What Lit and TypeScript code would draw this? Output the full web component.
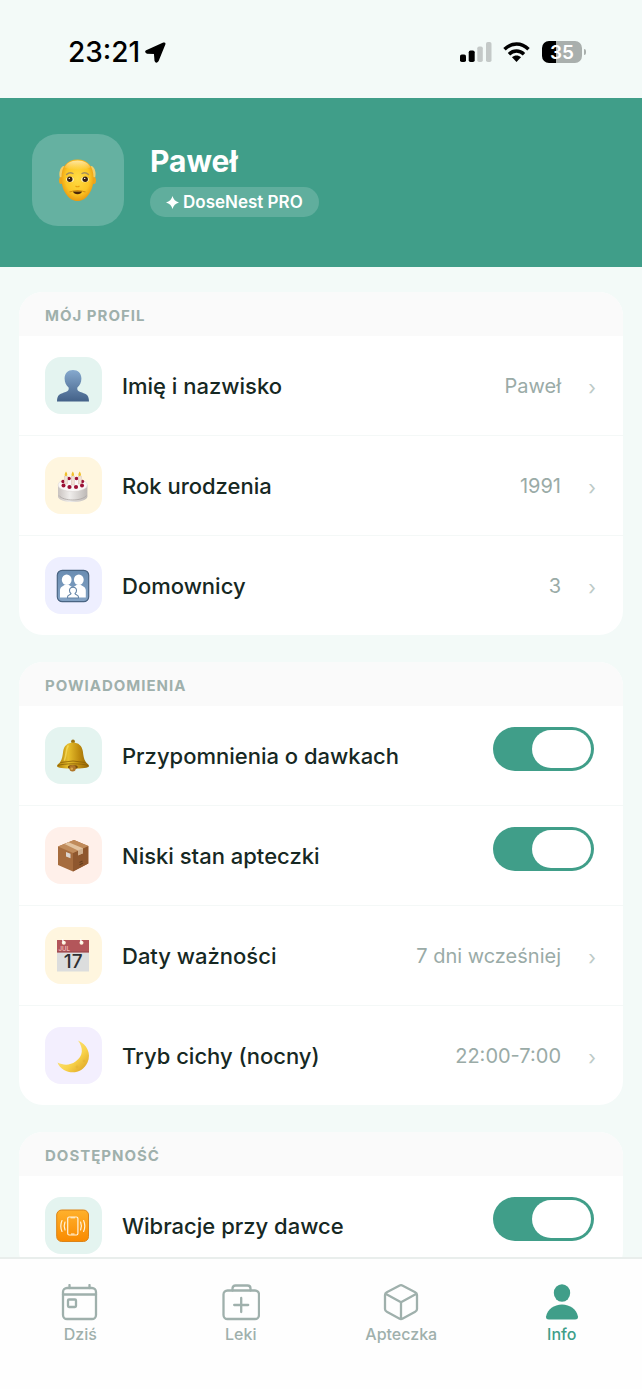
import { LitElement, html, css, svg, nothing, type TemplateResult } from "lit";
import { customElement, property } from "lit/decorators.js";

const avatarArt = html`<svg viewBox="0 0 92 92" aria-hidden="true">
  <defs>
    <radialGradient id="skin" cx="50%" cy="45%" r="58%">
      <stop offset="0" stop-color="#ffdc45" /><stop offset=".65" stop-color="#fcc625" /><stop offset="1" stop-color="#e8920c" />
    </radialGradient>
    <linearGradient id="shine" x1="0" y1="0" x2="0" y2="1">
      <stop offset="0" stop-color="#ffe7a0" /><stop offset="1" stop-color="#ffe7a0" stop-opacity="0" />
    </linearGradient>
  </defs>
  <path d="M31 32c-3 2-4.500 7-3 12l5 3 2-14zM60 32c3 2 4.500 7 3 12l-5 3-2-14z" fill="#f3cf6a" />
  <ellipse cx="29" cy="46.500" rx="2" ry="3.500" fill="#eda51c" />
  <ellipse cx="62" cy="46.500" rx="2" ry="3.500" fill="#eda51c" />
  <path d="M45.500 25.500C35 25.500 29.500 33 29.500 43c0 7 1 12 4.500 17 3 4.500 7 7 11.500 7S54 64.500 57 60c3.500-5 4.500-10 4.500-17 0-10-5.500-17.500-16-17.500z" fill="url(#skin)" />
  <path d="M45.500 26.500c-7 0-11 3-13 7 6 3 20 3 26 0-2-4-6-7-13-7z" fill="url(#shine)" />
  <path d="M34.500 40.500q3-3 6.500-1M56.500 40.500q-3-3-6.500-1" fill="none" stroke="#a9925b" stroke-width="1.400" stroke-linecap="round" />
  <ellipse cx="38" cy="45.500" rx="3.800" ry="2.800" fill="#fff4c4" /><ellipse cx="53" cy="45.500" rx="3.800" ry="2.800" fill="#fff4c4" />
  <circle cx="37.800" cy="45.300" r="2.700" fill="#38200f" /><circle cx="53.200" cy="45.300" r="2.700" fill="#38200f" />
  <circle cx="37.300" cy="44.400" r=".7" fill="#fff" /><circle cx="52.700" cy="44.400" r=".7" fill="#fff" />
  <path d="M43.500 52q2 1.500 4 0" stroke="#e6a010" stroke-width="1.200" fill="none" />
  <path d="M37.500 58q8-3 16 0" stroke="#d28a12" stroke-width="1.200" fill="none" />
  <path d="M41 57.500h9q-1 2.800-4.500 2.800T41 57.500z" fill="#4d2608" />
</svg>`;

const tile: Record<string, TemplateResult> = {
  person: svg`
    <defs><linearGradient id="g" x1="0" y1="0" x2="0" y2="1"><stop offset="0" stop-color="#86a9ce"/><stop offset="1" stop-color="#436188"/></linearGradient></defs>
    <path d="M28 13c-5 0-8.400 3.400-8.400 8.600 0 3.800 1.600 7 4 9 .6 2.200-.4 3.400-3 4.500-4.500 1.700-8.600 2-8.600 9.400h32c0-7.400-4.100-7.700-8.600-9.400-2.600-1.100-3.600-2.300-3-4.500 2.400-2 4-5.200 4-9C36.400 16.400 33 13 28 13z" fill="url(#g)"/>`,
  cake: svg`
    <defs><linearGradient id="g" x1="0" y1="0" x2="1" y2="0"><stop offset="0" stop-color="#c9c3c0"/><stop offset=".4" stop-color="#efedeb"/><stop offset="1" stop-color="#bdb8b5"/></linearGradient></defs>
    <path d="M13 28v11.500c0 3.500 7 5.500 14.700 5.500s14.700-2 14.700-5.500V28z" fill="url(#g)"/>
    <path d="M14 38.500c2 3 8 4.500 13.700 4.500s11.700-1.500 13.700-4.500" fill="none" stroke="#aaa5a2" stroke-width=".8"/>
    <ellipse cx="27.700" cy="28" rx="14.700" ry="6.500" fill="#faf8f7" stroke="#d8d3d0" stroke-width=".5"/>
    <g fill="#9c1236"><circle cx="18" cy="24.500" r="1.700"/><circle cx="24" cy="21.500" r="1.800"/><circle cx="31.500" cy="21.500" r="1.800"/><circle cx="37.500" cy="24.500" r="1.700"/></g>
    <g fill="#f1dfd4" stroke="#cfb8ac" stroke-width=".4"><rect x="19.500" y="19" width="3" height="8"/><rect x="26.300" y="19" width="3" height="9"/><rect x="33.200" y="19" width="3" height="8"/></g>
    <g fill="#9c1236"><circle cx="18.500" cy="28.500" r="2"/><circle cx="24.500" cy="30" r="2.100"/><circle cx="31" cy="30" r="2.100"/><circle cx="37" cy="28.500" r="2"/></g>
    <g fill="#f0c02c"><path d="M21 14.500c2 3 1.400 4.500 0 4.500s-2-1.500 0-4.500zM27.800 14.500c2 3 1.400 4.500 0 4.500s-2-1.500 0-4.500zM34.700 14.500c2 3 1.400 4.500 0 4.500s-2-1.500 0-4.500z"/></g>`,
  family: svg`
    <defs><linearGradient id="g" x1="0" y1="0" x2="0" y2="1"><stop offset="0" stop-color="#6a8db2"/><stop offset="1" stop-color="#84a3c4"/></linearGradient></defs>
    <rect x="12.300" y="13.300" width="31.400" height="31.400" rx="5" fill="url(#g)" stroke="#4a6583" stroke-width="1.200"/>
    <g fill="#fff"><ellipse cx="21.700" cy="22.800" rx="4.900" ry="5.200"/><ellipse cx="33.800" cy="22.800" rx="4.900" ry="5.200"/>
    <path d="M15 40.500v-7c0-3.500 2.500-4 4.500-5.500h4.500c1.200 1 3.500 1.500 3.800 3.500.3-2 2.500-2.500 3.700-3.500H36c2 1.500 4.800 2 4.800 5.500v7z"/></g>
    <path d="M22.500 41v-1c0-2.500 3.500-2 3.500-3.500-1-.7-1.500-1.700-1.500-3 0-2 1.500-3.300 3.500-3.300s3.500 1.300 3.500 3.300c0 1.300-.5 2.300-1.500 3 0 1.500 3.500 1 3.500 3.500v1z" fill="#fff" stroke="#6484a6" stroke-width="1.100"/>`,
  bell: svg`
    <defs><linearGradient id="g" x1="0" y1="0" x2="1" y2="0"><stop offset="0" stop-color="#a87806"/><stop offset=".35" stop-color="#e8c02c"/><stop offset=".7" stop-color="#bd8a0e"/><stop offset="1" stop-color="#936405"/></linearGradient></defs>
    <circle cx="28" cy="14.500" r="1.900" fill="#9b7413"/>
    <path d="M28 15.500c-5.500 0-9 3.500-9.800 8.500-.7 5-1 8-3 11-1.500 2-3.200 2.500-3.200 4 0 2 7 2.500 16 2.500s16-.5 16-2.500c0-1.500-1.700-2-3.200-4-2-3-2.300-6-3-11-.8-5-4.300-8.500-9.800-8.500z" fill="url(#g)"/>
    <path d="M13 38.500c5-2.200 25-2.200 30 0M15.500 35.500q12.500-3 25 0" fill="none" stroke="#8a6007" stroke-width=".8"/>
    <path d="M23 19c-2 3-1.500 9-3.500 14" fill="none" stroke="#ffe76a" stroke-width="1.600" stroke-linecap="round" opacity=".6"/>
    <ellipse cx="27.800" cy="40" rx="5" ry="2" fill="#7c500b"/><circle cx="27.600" cy="41.300" r="3.200" fill="#b07628"/><circle cx="26.800" cy="41.800" r="1.300" fill="#d9a64a"/>`,
  box: svg`
    <path d="M13 19.500 29 13l14.300 6v17.500L28 44.500 13 38z" fill="#a66c3e"/>
    <path d="M28 26v18.500l15.300-8V19z" fill="#8f572e"/>
    <path d="M13 19.500 29 13l14.300 6L28 26z" fill="#c08b5b"/>
    <path d="m19.500 17 4-1.700L38 21.300v5l-5 2v-4.700z" fill="#e2c3a0"/><path d="m33 23.600 5-2.300v5l-5 2.200z" fill="#cfae8d"/>
    <path d="m21 25 4.500 1.700v4.500L21 29.500z" fill="#dcd5d0"/><path d="m34.500 35.500 3-1.500M34.500 38l3.500-2" stroke="#66401f" stroke-width="1.200"/>`,
  calendar: svg`
    <rect x="12" y="13" width="32" height="31.500" fill="#dcdddd"/>
    <rect x="12" y="13" width="32" height="12.500" fill="#b3565a"/>
    <path d="M12 24.800h32" stroke="#94464a" stroke-width=".8"/>
    <circle cx="18.800" cy="15.800" r="2" fill="#fff7df"/><circle cx="36.500" cy="15.800" r="2" fill="#fff7df"/>
    <path d="m17.500 12 1 4M35.500 12l1 4" stroke="#fff" stroke-width="1.200"/>
    <text x="13.500" y="24" font-size="6" font-weight="600" fill="#efb7b7">JUL</text>
    <text x="28.200" y="41.300" font-size="19" font-weight="500" text-anchor="middle" fill="#2f3032">17</text>`,
  moon: svg`
    <defs><linearGradient id="g" x1="0" y1="0" x2="1" y2="1"><stop offset="0" stop-color="#fff0a0"/><stop offset=".6" stop-color="#f8d24a"/><stop offset="1" stop-color="#d89a1c"/></linearGradient></defs>
    <path d="M33 13.500C42 17.500 46.500 26.500 42.500 35.500 38 45.500 27 47.500 19 43c-3-1.700-5.500-4.300-6.500-7.500 6 3 12.500 3 18-1C38.500 29 38.500 21 33 13.500z" fill="url(#g)"/>
    <circle cx="39" cy="34" r="1.300" fill="#e2ad30" opacity=".5"/><circle cx="32" cy="40" r="1.400" fill="#e2ad30" opacity=".4"/>`,
  vibration: svg`
    <defs><linearGradient id="g" x1="0" y1="0" x2="0" y2="1"><stop offset="0" stop-color="#ffb12c"/><stop offset="1" stop-color="#f98a00"/></linearGradient></defs>
    <rect x="11.700" y="13" width="31.800" height="31.500" rx="5" fill="url(#g)" stroke="#dc8418" stroke-width="1"/>
    <rect x="22.700" y="20" width="10.200" height="18" rx="1.500" fill="none" stroke="#fff3dc" stroke-width="1.200"/>
    <path d="M25.500 20.800h4.500M26 37h3.500" stroke="#fff3dc" stroke-width="1"/>
    <path d="M20 25q-1.600 4 0 8M17 23.500q-2.400 5.500 0 11M35.600 25q1.600 4 0 8M38.600 23.500q2.400 5.500 0 11" fill="none" stroke="#fff3dc" stroke-width="1.200" stroke-linecap="round"/>`,
};

interface Row {
  icon: string;
  tint: string;
  label: string;
  value?: string;
}

const sections: { title: string; rows: Row[] }[] = [
  {
    title: "Mój profil",
    rows: [
      { icon: "person", tint: "mint", label: "Imię i nazwisko", value: "Paweł" },
      { icon: "cake", tint: "cream", label: "Rok urodzenia", value: "1991" },
      { icon: "family", tint: "indigo", label: "Domownicy", value: "3" },
    ],
  },
  {
    title: "Powiadomienia",
    rows: [
      { icon: "bell", tint: "mint", label: "Przypomnienia o dawkach" },
      { icon: "box", tint: "peach", label: "Niski stan apteczki" },
      { icon: "calendar", tint: "cream", label: "Daty ważności", value: "7 dni wcześniej" },
      { icon: "moon", tint: "violet", label: "Tryb cichy (nocny)", value: "22:00-7:00" },
    ],
  },
  {
    title: "Dostępność",
    rows: [{ icon: "vibration", tint: "mint", label: "Wibracje przy dawce" }],
  },
];

@customElement("settings-row")
class SettingsRow extends LitElement {
  @property({ attribute: false }) row!: Row;

  static styles = css`
    :host { display: block; }
    .row {
      display: flex; align-items: center; gap: 20px; width: 100%; box-sizing: border-box;
      padding: 21px 26px; border: 0; background: none; text-align: left;
      font: inherit; color: #162823; cursor: pointer;
    }
    .tile { flex: none; width: 57px; height: 57px; border-radius: 16px; }
    .tile svg { display: block; width: 100%; height: 100%; }
    .mint { background: #e4f4f0; }
    .cream { background: #fff6df; }
    .indigo { background: #eeefff; }
    .peach { background: #fff0ea; }
    .violet { background: #f3effe; }
    .label { flex: 1; font-size: 22px; font-weight: 500; line-height: 28px; }
    .value { font-size: 20px; line-height: 28px; font-weight: 400; color: #9aaba7; }
    .chevron { width: 10px; margin-left: 6px; padding-top: 4px; text-align: center; font-size: 20px; line-height: 28px; color: #bccac7; }
    .switch {
      appearance: none; flex: none; align-self: flex-start; display: flex; box-sizing: border-box;
      width: 101px; height: 44px; margin: 0 3px 0 0; padding: 3px; border-radius: 22px;
      background: #d5dedb; cursor: pointer;
    }
    .switch::before { content: ""; width: 59px; height: 38px; border-radius: 19px; background: #fff; }
    .switch:checked { justify-content: flex-end; background: #409e89; }
  `;

  render() {
    const { icon, tint, label, value } = this.row;
    const art = html`<span class="tile ${tint}"><svg viewBox="0 0 57 57" aria-hidden="true">${tile[icon]}</svg></span>`;
    return value
      ? html`<button class="row" type="button">${art}<span class="label">${label}</span><span class="value">${value}</span><span class="chevron" aria-hidden="true">›</span></button>`
      : html`<label class="row">${art}<span class="label">${label}</span><input class="switch" type="checkbox" role="switch" checked /></label>`;
  }
}

const tabs = [
  {
    label: "Dziś", href: "#dzis",
    art: svg`<rect x="2" y="4" width="33" height="31" rx="4"/><path d="M2 10.500h33M8.500 1v3M28.500 1v3"/><rect x="7" y="15.500" width="8" height="7.500" rx="1"/>`,
  },
  {
    label: "Leki", href: "#leki",
    art: svg`<rect x="1.500" y="6.500" width="35.500" height="28.500" rx="4"/><path d="M10.500 6.500V4.500c0-2 1-3 3-3h12c2 0 3 1 3 3v2M19.200 14v14M12.200 21h14"/>`,
  },
  {
    label: "Apteczka", href: "#apteczka",
    art: svg`<path d="M17.200 1.700 4.800 8.200c-1.200.6-1.800 1.500-1.800 2.800v14c0 1.200.6 2.200 1.800 2.800L17.200 34.500c1.100.6 2.500.6 3.600 0l12.400-6.700c1.200-.6 1.800-1.600 1.800-2.800V11c0-1.300-.6-2.200-1.800-2.800L20.800 1.700c-1.100-.6-2.500-.6-3.600 0zM3.500 9.700 19 18.300l15.500-8.600M19 18.300V35"/>`,
  },
  {
    label: "Info", href: "#info", active: true,
    art: svg`<g fill="currentColor" stroke="none"><ellipse cx="19" cy="9" rx="8.200" ry="8.700"/><path d="M6 35.500c-2.300 0-3.300-1.200-2.900-3.300C4.500 25.500 11 20.500 19 20.500s14.500 5 15.900 11.700c.4 2.100-.6 3.300-2.900 3.300z"/></g>`,
  },
];

@customElement("app-root")
class AppRoot extends LitElement {
  static styles = css`
    :host {
      display: flex; flex-direction: column; height: 100vh; overflow: hidden;
      background: #f3faf8; color: #162823; font-family: Inter, "Liberation Sans", sans-serif;
    }
    h1, h2, p { margin: 0; }
    .status {
      flex: none; display: flex; align-items: center; justify-content: space-between;
      box-sizing: border-box; height: 98px; padding: 6px 56px 0 68px; color: #000;
    }
    .clock { display: flex; align-items: center; gap: 5px; font-size: 28px; line-height: 32px; font-weight: 500; }
    .clock svg, .signals svg { display: block; }
    .signals { display: flex; align-items: center; gap: 11px; }
    .battery { display: flex; align-items: center; gap: 2px; }
    .cell {
      width: 40px; height: 22px; border-radius: 7px; text-align: center;
      background: linear-gradient(90deg, #000 35%, #a9afad 35%);
      color: #fff; font-size: 19px; line-height: 24px; font-weight: 600;
    }
    .cap { width: 2px; height: 6px; border-radius: 0 2px 2px 0; background: #a9afad; }
    .profile {
      flex: none; display: flex; align-items: center; gap: 26px;
      padding: 36px 32px 41px; background: #409e89; color: #fff;
    }
    .avatar { flex: none; width: 92px; height: 92px; border-radius: 26px; background: #65b1a1; }
    .avatar svg { display: block; width: 100%; height: 100%; }
    .who { display: flex; flex-direction: column; align-items: flex-start; gap: 8px; }
    .name { font-size: 30px; line-height: 36px; font-weight: 700; }
    .plan {
      display: flex; align-items: center; gap: 4px; padding: 0 16px; border-radius: 15px;
      background: #60ae9d; font-size: 17px; line-height: 30px; font-weight: 600;
    }
    .content {
      flex: 1; min-height: 0; overflow: hidden; display: flex; flex-direction: column; gap: 27px;
      padding: 25px 19px 0;
    }
    .card { flex: none; overflow: hidden; border-radius: 24px; background: #fff; }
    .heading {
      padding: 14px 26px 10px; background: #fafafa; color: #9fb0ac;
      font-size: 15px; line-height: 20px; font-weight: 700; letter-spacing: 1px; text-transform: uppercase;
    }
    .line + .line { border-top: 1px solid #f4f8f7; }
    .tabs {
      flex: none; display: grid; grid-template-columns: repeat(4, 1fr); box-sizing: border-box;
      height: 132px; padding-top: 25px; border-top: 2px solid #e9eeec; background: #fefefe;
    }
    .tab {
      display: flex; flex-direction: column; align-items: center; gap: 2px;
      color: #9fb0ac; text-decoration: none; font-size: 16px; line-height: 20px; font-weight: 500;
    }
    .tab svg { display: block; fill: none; stroke: currentColor; stroke-width: 2.3; stroke-linecap: round; stroke-linejoin: round; }
    .active { color: #409e89; }
  `;

  render() {
    return html`
      <div class="status">
        <div class="clock">
          <span>23:21</span>
          <svg width="21" height="21" viewBox="0 0 21 21" aria-hidden="true">
            <path d="M1.500 8.900 18.600 1.300Q20 .9 19.600 2.200L12.800 18.900Q11.300 21 10.300 18.700L9.700 11.200 2 10.900Q.2 9.900 1.500 8.900z" fill="#000" stroke="#000" stroke-width="1.600" stroke-linejoin="round" />
          </svg>
        </div>
        <div class="signals">
          <svg width="32" height="20" viewBox="0 0 32 20" aria-hidden="true">
            <rect x="0" y="12.500" width="6" height="7.500" rx="1.800" /><rect x="8.700" y="8.500" width="6" height="11.500" rx="1.800" />
            <g fill="#c4c9c8"><rect x="17.300" y="4.500" width="5.500" height="15.500" rx="1.800" /><rect x="26" y="0" width="5.500" height="20" rx="1.800" /></g>
          </svg>
          <svg width="28" height="20" viewBox="0 0 28 20" aria-hidden="true">
            <g fill="none" stroke="#000" stroke-width="3.400"><path d="M1.500 7.300C8.400.2 18.600.2 25.500 7.300M6 12.200c4.300-4.200 10.700-4.200 15 0" /></g>
            <path d="M9 15.300c2.500-2.300 6.500-2.300 9 0L13.500 20z" />
          </svg>
          <div class="battery"><div class="cell">35</div><div class="cap"></div></div>
        </div>
      </div>
      <header class="profile">
        <div class="avatar">${avatarArt}</div>
        <div class="who">
          <h1 class="name">Paweł</h1>
          <p class="plan">
            <svg width="13" height="13" viewBox="0 0 13 13" aria-hidden="true"><path d="M6.500 0Q7.800 5.200 13 6.500 7.800 7.800 6.500 13 5.200 7.800 0 6.500 5.200 5.200 6.500 0z" fill="#fff" /></svg>
            <span>DoseNest PRO</span>
          </p>
        </div>
      </header>
      <main class="content">
        ${sections.map(
          (s) => html`<section class="card">
            <h2 class="heading">${s.title}</h2>
            ${s.rows.map((r) => html`<settings-row class="line" .row=${r}></settings-row>`)}
          </section>`
        )}
      </main>
      <nav class="tabs">
        ${tabs.map(
          (t) => html`<a class="tab ${t.active ? "active" : ""}" href=${t.href} aria-current=${t.active ? "page" : nothing}>
            <svg width="38" height="38" viewBox="0 0 38 38" aria-hidden="true">${t.art}</svg><span>${t.label}</span>
          </a>`
        )}
      </nav>
    `;
  }
}
